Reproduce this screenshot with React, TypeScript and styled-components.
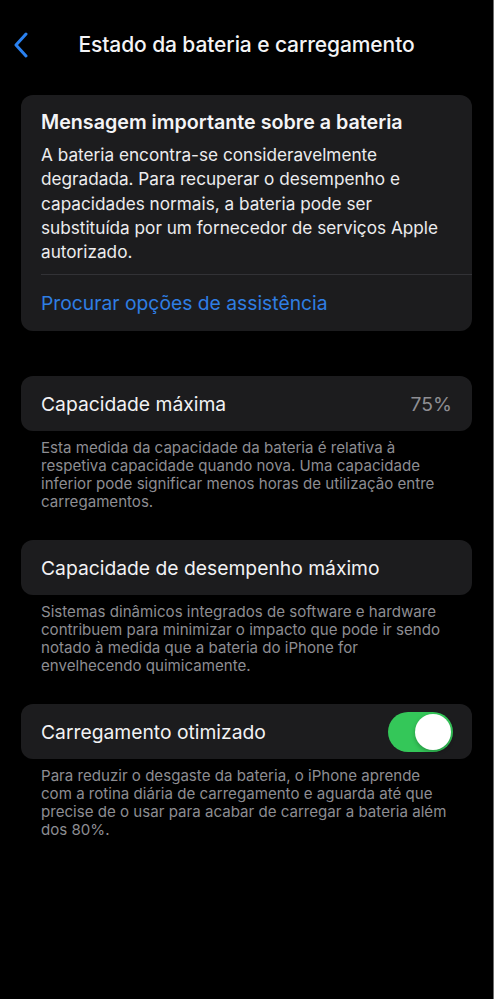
import React from "react";
import styled, { createGlobalStyle } from "styled-components";

const Global = createGlobalStyle`
  html, body { margin: 0; padding: 0; background: #000; }
  body { font-family: Inter, "Noto Sans", "Liberation Sans", sans-serif; -webkit-font-smoothing: antialiased; }
  * { box-sizing: border-box; }
`;

const Page = styled.div`
  width: 494px;
  min-height: 999px;
  background: #000;
  border-right: 1px solid #6f6f6f;
  padding: 0 21px 40px 21px;
  color: #f2f2f4;
`;

const Header = styled.header`
  position: relative;
  height: 95px;
  display: flex;
  align-items: flex-start;
  justify-content: center;
  padding-top: 31px;
`;

const Back = styled.button`
  position: absolute;
  left: -11px;
  top: 31px;
  width: 22px;
  height: 28px;
  padding: 0;
  border: 0;
  background: transparent;
  display: flex;
  align-items: center;
  justify-content: center;
`;

const Title = styled.h1`
  margin: 0;
  font-size: 21px;
  line-height: 28px;
  font-weight: 500;
  letter-spacing: -0.1px;
  color: #f4f4f6;
`;

const Card = styled.section`
  background: #1c1c1e;
  border-radius: 12px;
  overflow: hidden;
`;

const MessageBody = styled.div`
  padding: 15px 20px 10px 20px;
`;

const MessageTitle = styled.h2`
  margin: 0;
  font-size: 19.7px;
  line-height: 24px;
  font-weight: 600;
  color: #f4f4f6;
`;

const MessageText = styled.p`
  margin: 9px 0 0 0;
  font-size: 17.2px;
  line-height: 24.3px;
  font-weight: 400;
  color: #ececee;
`;

const Separator = styled.div`
  height: 1px;
  background: #323236;
  margin-left: 20px;
`;

const Link = styled.a`
  display: block;
  padding: 16px 20px 16px 20px;
  font-size: 19.3px;
  line-height: 24px;
  color: #2f7ee3;
  text-decoration: none;
`;

const Section = styled.div<{ $gap: number }>`
  margin-top: ${(p) => p.$gap}px;
`;

const Row = styled.div`
  height: 55px;
  display: flex;
  align-items: center;
  justify-content: space-between;
  padding: 0 20px;
  font-size: 19.3px;
  color: #f2f2f4;
`;

const Value = styled.span`
  color: #8e8e93;
`;

const Footer = styled.p`
  margin: 8px 0 0 0;
  padding: 0 20px;
  font-size: 15.1px;
  line-height: 18px;
  color: #8d8d92;
`;

const Toggle = styled.div<{ $on: boolean }>`
  width: 65px;
  height: 40px;
  border-radius: 20px;
  background: ${(p) => (p.$on ? "#34c759" : "#39393d")};
  display: flex;
  align-items: center;
  justify-content: ${(p) => (p.$on ? "flex-end" : "flex-start")};
  padding: 2px;
  margin-right: -1px;
`;

const Knob = styled.div`
  width: 36px;
  height: 36px;
  border-radius: 50%;
  background: #fff;
  box-shadow: 0 2px 4px rgba(0, 0, 0, 0.25);
`;

export default function App() {
  return (
    <>
      <Global />
      <Page>
        <Header>
          <Back aria-label="Voltar">
            <svg width="16" height="26" viewBox="0 0 16 26" fill="none">
              <path d="M13 2 L3 13 L13 24" stroke="#2a81f0" strokeWidth="3" strokeLinecap="round" strokeLinejoin="round" />
            </svg>
          </Back>
          <Title>Estado da bateria e carregamento</Title>
        </Header>

        <Card>
          <MessageBody>
            <MessageTitle>Mensagem importante sobre a bateria</MessageTitle>
            <MessageText>
              A bateria encontra-se consideravelmente degradada. Para recuperar o desempenho e
              capacidades normais, a bateria pode ser substituída por um fornecedor de serviços
              Apple autorizado.
            </MessageText>
          </MessageBody>
          <Separator />
          <Link href="#">Procurar opções de assistência</Link>
        </Card>

        <Section $gap={45}>
          <Card>
            <Row>
              <span>Capacidade máxima</span>
              <Value>75%</Value>
            </Row>
          </Card>
          <Footer>
            Esta medida da capacidade da bateria é relativa à respetiva capacidade quando nova.
            Uma capacidade inferior pode significar menos horas de utilização entre carregamentos.
          </Footer>
        </Section>

        <Section $gap={29}>
          <Card>
            <Row>
              <span>Capacidade de desempenho máximo</span>
            </Row>
          </Card>
          <Footer>
            Sistemas dinâmicos integrados de software e hardware contribuem para minimizar o
            impacto que pode ir sendo notado à medida que a bateria do iPhone for envelhecendo
            quimicamente.
          </Footer>
        </Section>

        <Section $gap={29}>
          <Card>
            <Row>
              <span>Carregamento otimizado</span>
              <Toggle $on>
                <Knob />
              </Toggle>
            </Row>
          </Card>
          <Footer>
            Para reduzir o desgaste da bateria, o iPhone aprende com a rotina diária de
            carregamento e aguarda até que precise de o usar para acabar de carregar a bateria
            além dos 80%.
          </Footer>
        </Section>
      </Page>
    </>
  );
}
